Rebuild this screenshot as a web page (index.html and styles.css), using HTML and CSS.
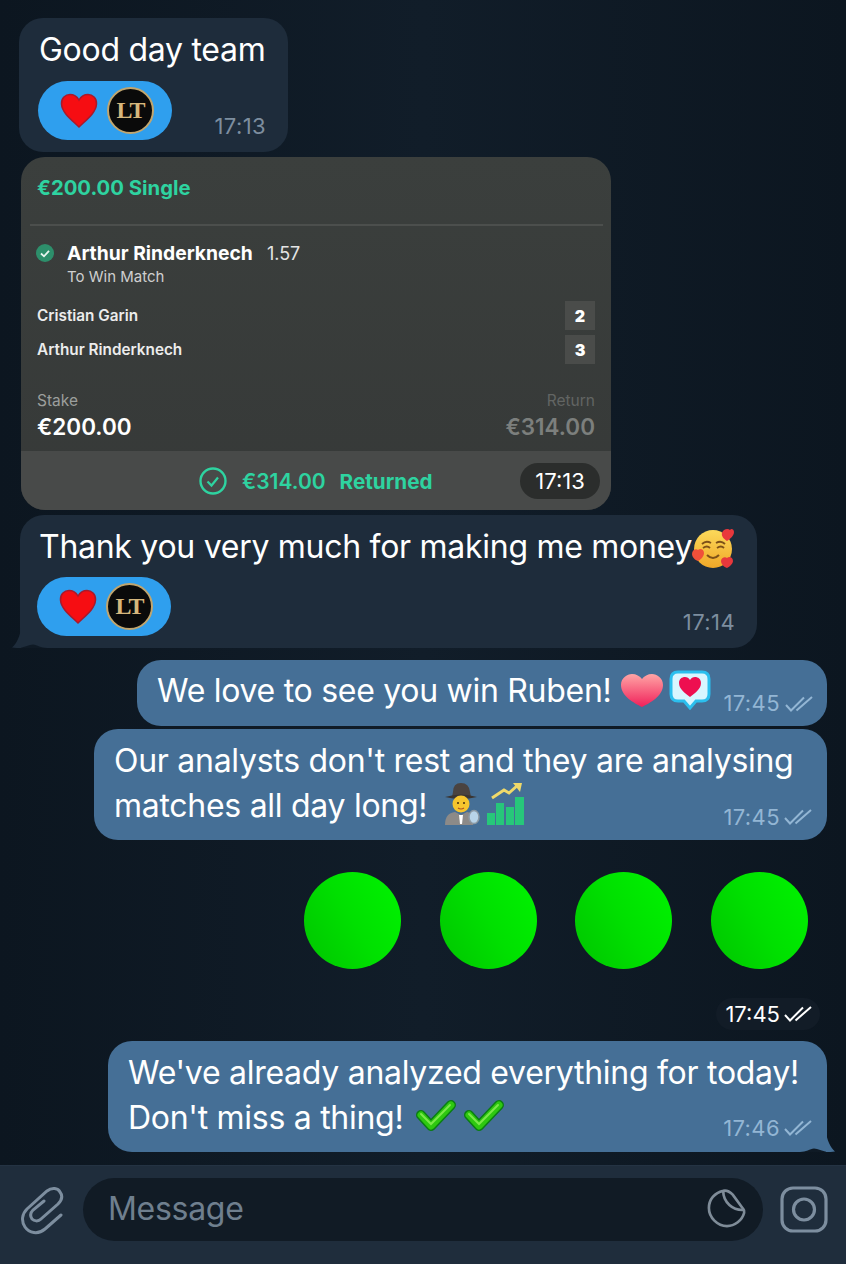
FILE: index.html
```html
<!DOCTYPE html>
<html lang="en">
<head>
    <meta charset="UTF-8">
    <meta name="viewport" content="width=device-width, initial-scale=1.0">
    <title>Chat</title>
    <link rel="stylesheet" href="styles.css">
</head>
<body>
    <svg class="defs" width="0" height="0">
        <defs>
            <symbol id="ticks" viewBox="0 0 28 16">
                <path d="M1 9l5 5.500L19 1.500M11.500 14.500L27 1" fill="none" stroke="currentColor" stroke-width="2"/>
            </symbol>
            <symbol id="red-heart" viewBox="0 0 38 36">
                <path d="M19 34C12 27 2 20 1.500 11 1.200 5 5.500 1.500 10 1.500c4 0 7 2 9 5.500 2-3.500 5-5.500 9-5.500 4.500 0 8.800 3.500 8.500 9.500C36 20 26 27 19 34z" fill="#f60d12" stroke="#a81a2c" stroke-width="1.500"/>
            </symbol>
            <symbol id="green-check" viewBox="0 0 40 34">
                <path d="M5 16l10 11L35 6" fill="none" stroke="#0a7d14" stroke-width="10" stroke-linejoin="round" stroke-linecap="round"/>
                <path d="M5 16l10 11L35 6" fill="none" stroke="#2ec810" stroke-width="7" stroke-linejoin="round" stroke-linecap="round"/>
                <path d="M5 15l10 10L34 6" fill="none" stroke="#7be84a" stroke-width="2" stroke-linecap="round"/>
            </symbol>
        </defs>
    </svg>

    <main class="chat">
        <div class="bubble in msg-first">
            <p class="text">Good day team</p>
            <div class="meta-row">
                <div class="reaction">
                    <svg class="heart" width="38" height="36"><use href="#red-heart"/></svg>
                    <div class="lt-badge">LT</div>
                </div>
                <span class="time">17:13</span>
            </div>
        </div>

        <div class="bet-card">
            <div class="bet-head">€200.00 Single</div>
            <div class="bet-body">
                <div class="pick">
                    <svg class="pick-check" width="18" height="18" viewBox="0 0 18 18">
                        <circle cx="9" cy="9" r="9" fill="#2d8f6b"/>
                        <path d="M5 9.500l3 2.800 5-5.500" fill="none" stroke="#e8f5ef" stroke-width="1.800"/>
                    </svg>
                    <span class="pick-name">Arthur Rinderknech</span>
                    <span class="pick-odds">1.57</span>
                </div>
                <div class="pick-market">To Win Match</div>
                <div class="score-row"><span>Cristian Garin</span><b class="score">2</b></div>
                <div class="score-row"><span>Arthur Rinderknech</span><b class="score">3</b></div>
                <div class="money">
                    <div>
                        <div class="money-label">Stake</div>
                        <div class="money-value">€200.00</div>
                    </div>
                    <div class="money-return">
                        <div class="money-label">Return</div>
                        <div class="money-value">€314.00</div>
                    </div>
                </div>
            </div>
            <div class="bet-foot">
                <svg class="returned-icon" width="28" height="28" viewBox="0 0 28 28">
                    <circle cx="14" cy="14" r="12.500" fill="none" stroke="#2ed3a0" stroke-width="2.400"/>
                    <path d="M8.500 14.500l4 4 6.500-8" fill="none" stroke="#2ed3a0" stroke-width="2.200"/>
                </svg>
                <span class="returned-sum">€314.00</span>
                <span class="returned-word">Returned</span>
                <span class="time-pill">17:13</span>
            </div>
        </div>

        <div class="bubble in msg-thanks">
            <p class="text">Thank you very much for making me money<svg class="emoji-face" width="42" height="42" viewBox="0 0 42 42">
                <defs>
                    <linearGradient id="face" x1="0" y1="0" x2="0" y2="1">
                        <stop offset="0" stop-color="#fcd95a"/>
                        <stop offset="1" stop-color="#f0a828"/>
                    </linearGradient>
                </defs>
                <circle cx="21" cy="22" r="19" fill="url(#face)"/>
                <path d="M10 17q4-4 9-1M24 16q5-3 9 1M11 21q4-3 7 0M25 21q4-3 7 0" fill="none" stroke="#7d5018" stroke-width="1.800"/>
                <path d="M15 28q6 6 12 0" fill="none" stroke="#7d5018" stroke-width="2"/>
                <path d="M30 6c1-4 6-5 8-3 1-2 4-1 4 2 0 4-4 7-7 9-3-2-6-5-5-8z" fill="#e8383c"/>
                <path d="M0 27c0-4 4-6 6-4 2-2 6-1 6 3 0 4-4 7-6 8-3-1-6-4-6-7z" fill="#f0503a"/>
                <path d="M29 34c0-3 4-5 6-3 2-2 6-1 6 3 0 3-4 6-6 7-3-1-6-4-6-7z" fill="#e8383c"/>
            </svg></p>
            <div class="meta-row">
                <div class="reaction">
                    <svg class="heart" width="38" height="36"><use href="#red-heart"/></svg>
                    <div class="lt-badge">LT</div>
                </div>
                <span class="time">17:14</span>
            </div>
            <svg class="tail tail-left" width="36" height="20" viewBox="0 0 36 20">
                <path d="M0 20C6 20 10 17 14 16.500 18 17 22 19 27 20z" fill="#0f1a25"/>
                <path d="M26 0C27 8 30 15 35 19.500 32 20 29 20 26 20z" fill="#1e2c3b"/>
            </svg>
        </div>

        <div class="bubble out msg-love">
            <p class="text">We love to see you win Ruben!</p>
            <svg class="emoji-pink" width="44" height="36" viewBox="0 0 44 36">
                <defs>
                    <linearGradient id="pink" x1="0" y1="0" x2="0" y2="1">
                        <stop offset="0" stop-color="#ffa5a5"/>
                        <stop offset="1" stop-color="#f0205a"/>
                    </linearGradient>
                </defs>
                <path d="M22 34C14 30 1 23 1 12 1 5 7 1 12 1c4 0 8 2 10 5 2-3 6-5 10-5 5 0 11 4 11 11 0 11-13 18-21 22z" fill="url(#pink)"/>
            </svg>
            <svg class="emoji-speech" width="42" height="40" viewBox="0 0 42 40">
                <path d="M9 2h24q7 0 7 7v15q0 7-7 7h-6l-6 7-6-7H9q-7 0-7-7V9q0-7 7-7z" fill="#d8f6ff" stroke="#2bbfee" stroke-width="3"/>
                <path d="M21 27c-5-4-11-8-11-14 0-4 3-6 6-6 2 0 4 1 5 3 1-2 3-3 5-3 3 0 6 2 6 6 0 6-6 10-11 14z" fill="#ee0f50"/>
            </svg>
            <span class="time">17:45</span>
            <svg class="ticks" width="28" height="16"><use href="#ticks"/></svg>
        </div>

        <div class="bubble out msg-analysts">
            <div class="text">
                <div>Our analysts don't rest and they are analysing</div>
                <div class="line">
                    <span>matches all day long!</span>
                    <svg class="emoji-spy" width="36" height="44" viewBox="0 0 36 44">
                        <path d="M9 10q0-9 8-9 8 0 9 9l1 5H8z" fill="#4a4340"/>
                        <path d="M1 15q16-5 32 0-16 4-32 0z" fill="#3a3532"/>
                        <circle cx="17" cy="22" r="8.500" fill="#f6c52e"/>
                        <circle cx="14" cy="21" r="1" fill="#402a10"/>
                        <circle cx="20" cy="21" r="1" fill="#402a10"/>
                        <path d="M14 26q3 2 6 0" fill="none" stroke="#b05020" stroke-width="1.200"/>
                        <path d="M1 43q0-12 10-13l6 3 6-3q6 1 8 6l-2 7H1z" fill="#8c8a88"/>
                        <path d="M15 33h4l-1 9h-2z" fill="#fff"/>
                        <ellipse cx="30" cy="35" rx="5" ry="6.500" fill="#b8d4e8" stroke="#8c9aa4" stroke-width="1.500"/>
                    </svg>
                    <svg class="emoji-chart" width="40" height="44" viewBox="0 0 40 44">
                        <path d="M5 16l12-8 5 3 9-8" fill="none" stroke="#efd96a" stroke-width="3"/>
                        <path d="M26 1h9l-2 9z" fill="#efd96a"/>
                        <rect x="0" y="31" width="8" height="12" fill="#27c77a"/>
                        <rect x="9" y="21" width="8" height="22" fill="#27c77a"/>
                        <rect x="19" y="25" width="8" height="18" fill="#27c77a"/>
                        <rect x="28" y="15" width="9" height="28" fill="#27c77a"/>
                    </svg>
                </div>
            </div>
            <span class="time">17:45</span>
            <svg class="ticks" width="28" height="16"><use href="#ticks"/></svg>
        </div>

        <div class="dots">
            <span class="dot"></span>
            <span class="dot"></span>
            <span class="dot"></span>
            <span class="dot"></span>
        </div>

        <div class="sticker-time">
            <span>17:45</span>
            <svg width="28" height="16"><use href="#ticks"/></svg>
        </div>

        <div class="bubble out msg-today">
            <div class="text">
                <div>We've already analyzed everything for today!</div>
                <div class="line">
                    <span>Don't miss a thing!</span>
                    <svg class="emoji-check" width="40" height="34"><use href="#green-check"/></svg>
                    <svg class="emoji-check" width="40" height="34"><use href="#green-check"/></svg>
                </div>
            </div>
            <span class="time">17:46</span>
            <svg class="ticks" width="28" height="16"><use href="#ticks"/></svg>
            <svg class="tail tail-right" width="36" height="20" viewBox="0 0 36 20">
                <path d="M0 20C6 20 10 17 14 16.500 18 17 22 19 27 20z" fill="#0f1a25"/>
                <path d="M26 0C27 8 30 15 35 19.500 32 20 29 20 26 20z" fill="#456f96"/>
            </svg>
        </div>
    </main>

    <footer class="input-bar">
        <svg class="clip" width="44" height="50" viewBox="0 0 44 50">
            <path d="M41 30L25 44C18 50 9 48 5 42 1 36 2 29 7 24L27 6C32 2 38 3 40 7 43 11 42 15 38 19L21 34C18 37 14 36 12 34 10 31 10 28 13 25L24 16" fill="none" stroke="#7d8e9f" stroke-width="3" stroke-linecap="round"/>
        </svg>
        <div class="input">
            <span class="placeholder">Message</span>
            <svg class="sticker" width="40" height="40" viewBox="0 0 42 42">
                <path d="M17 3C8 5 2 12 2 21c0 10 9 19 19 19 8 0 16-6 18-14 .5-2 0-3-1-4L27 7c-3-3-6-5-10-4z" fill="none" stroke="#7f8c98" stroke-width="2.800"/>
                <path d="M17 3c0 12 10 21 22 20" fill="none" stroke="#7f8c98" stroke-width="2.800"/>
            </svg>
        </div>
        <svg class="camera" width="48" height="48" viewBox="0 0 48 48">
            <rect x="2" y="2" width="44" height="43" rx="11" fill="none" stroke="#7d8e9f" stroke-width="3.200"/>
            <circle cx="24" cy="23.500" r="10.500" fill="none" stroke="#7d8e9f" stroke-width="3.200"/>
        </svg>
    </footer>
</body>
</html>
```

FILE: styles.css
```css
* { box-sizing: border-box; }
html, body { margin: 0; padding: 0; }
body {
    width: 846px;
    height: 1264px;
    overflow: hidden;
    display: flex;
    flex-direction: column;
    font-family: 'Inter', 'Liberation Sans', sans-serif;
    background: linear-gradient(90deg, #0c1620 0%, #111d29 50%, #0c1620 100%);
    color: #fff;
}
.defs { position: absolute; }
.chat {
    flex: 1;
    display: flex;
    flex-direction: column;
    padding-top: 18px;
}
.bubble {
    position: relative;
    flex: none;
}
.in { background: #1e2c3b; border-radius: 24px; }
.out { background: #456f96; border-radius: 24px; }
.text {
    margin: 0;
    font-size: 32px;
    line-height: 45px;
    letter-spacing: -0.28px;
    white-space: nowrap;
}
.line {
    display: flex;
    align-items: center;
    height: 45px;
}
.time {
    font-size: 22px;
    line-height: 26px;
    letter-spacing: 0.4px;
    color: #7d8e9f;
}
.out .time { color: #93b6d4; }
.ticks { color: #93b6d4; }
.meta-row {
    display: flex;
    justify-content: space-between;
    align-items: flex-end;
}
.meta-row .time { margin-bottom: 1px; }
.reaction {
    display: flex;
    align-items: center;
    gap: 9px;
    width: 134px;
    height: 59px;
    padding-left: 22px;
    border-radius: 30px;
    background: #2f9fee;
}
.lt-badge {
    width: 47px;
    height: 47px;
    display: flex;
    align-items: center;
    justify-content: center;
    border-radius: 50%;
    border: 2px solid #c0a56e;
    background: #0a0a0a;
    color: #d6b77c;
    font-family: 'Liberation Serif', serif;
    font-weight: 700;
    font-size: 24px;
    letter-spacing: -1px;
}

/* received */
.msg-first {
    width: 269px;
    height: 134px;
    margin-left: 19px;
    padding: 9px 22px 0 19px;
}
.msg-first .text { margin-left: 1px; }
.msg-first .meta-row { margin-top: 9px; }

.msg-thanks {
    width: 737px;
    height: 133px;
    margin: 5px 0 0 20px;
    padding: 9px 22px 0 17px;
    border-bottom-left-radius: 0;
}
.msg-thanks .text { margin-left: 2px; display: flex; align-items: center; }
.emoji-face { margin-top: 2px; }
.msg-thanks .meta-row { margin-top: 8px; }

.tail {
    position: absolute;
    bottom: 0;
}
.tail-right { right: -9px; }
.tail-left {
    left: -9px;
    transform: scaleX(-1);
}

/* bet card */
.bet-card {
    width: 590px;
    height: 353px;
    margin: 5px 0 0 21px;
    border-radius: 24px;
    overflow: hidden;
    display: flex;
    flex-direction: column;
    background: linear-gradient(180deg, #3b3f3d 0%, #363938 100%);
}
.bet-head {
    height: 69px;
    margin: 0 8px 0 9px;
    padding: 19px 0 0 7px;
    border-bottom: 2px solid #4c4f4d;
    color: #2ed3a0;
    font-weight: 700;
    font-size: 20.300px;
    line-height: 24px;
}
.bet-body {
    flex: 1;
    padding: 15px 16px 0 16px;
}
.pick {
    display: flex;
    align-items: center;
    height: 24px;
}
.pick-check { margin-left: -1px; }
.pick-name {
    margin-left: 13px;
    font-weight: 700;
    font-size: 19.300px;
}
.pick-odds {
    margin-left: 14px;
    font-size: 18px;
    color: #e4e4e4;
}
.pick-market {
    margin: 2px 0 14px 30px;
    font-size: 15px;
    line-height: 20px;
    color: #cfcfcf;
}
.score-row {
    display: flex;
    justify-content: space-between;
    align-items: center;
    height: 29px;
    margin-bottom: 5px;
    font-weight: 600;
    font-size: 15.300px;
    color: #ececec;
}
.score {
    width: 30px;
    height: 29px;
    display: flex;
    align-items: center;
    justify-content: center;
    background: #4a4c4a;
    font-size: 16px;
    color: #fff;
}
.money {
    display: flex;
    justify-content: space-between;
    margin-top: 27px;
}
.money-label {
    font-size: 15.500px;
    line-height: 20px;
    color: #9c9f9d;
}
.money-value {
    margin-top: 1px;
    font-weight: 600;
    font-size: 22.500px;
    line-height: 30px;
}
.money-return { text-align: right; }
.money-return .money-label { color: #626563; }
.money-return .money-value { color: #7c7f7d; }
.bet-foot {
    position: relative;
    height: 59px;
    flex: none;
    display: flex;
    align-items: center;
    padding-left: 178px;
    background: #484a49;
    color: #2ed3a0;
    font-weight: 600;
    font-size: 21px;
    line-height: 28px;
}
.returned-sum { margin-left: 15px; padding-top: 2px; }
.returned-word { margin-left: 14px; padding-top: 2px; font-weight: 700; font-size: 20.700px; }
.time-pill {
    margin-left: auto;
    margin-right: 11px;
    width: 80px;
    height: 36px;
    display: flex;
    align-items: center;
    justify-content: center;
    border-radius: 18px;
    background: #2b2d2c;
    color: #fff;
    font-weight: 400;
    font-size: 22px;
}

/* sent */
.msg-love {
    width: 690px;
    height: 66px;
    margin: 12px 0 0 137px;
    padding: 8px 14px 0 20px;
    display: flex;
    align-items: flex-start;
}
.msg-love .emoji-pink { margin: 5px 0 0 auto; }
.msg-love .emoji-speech { margin: 2px 0 0 5px; }
.msg-love .time { margin: 22px 0 0 12px; }
.msg-love .ticks { margin: 28px 0 0 5px; }

.msg-analysts {
    width: 733px;
    height: 111px;
    margin: 3px 0 0 94px;
    padding: 9px 15px 0 20px;
}
.msg-analysts > .time,
.msg-today > .time {
    position: absolute;
    right: 47px;
    bottom: 10px;
}
.msg-analysts > .ticks,
.msg-today > .ticks {
    position: absolute;
    right: 15px;
    bottom: 15px;
}
.msg-today > .time { bottom: 11px; }
.msg-today > .ticks { bottom: 16px; }
.emoji-spy { margin: -3px 0 0 17px; }
.emoji-chart { margin: -4px 0 0 7px; }
.emoji-check { margin: -3px 0 0 13px; }
.emoji-check + .emoji-check { margin-left: 8px; }

.dots {
    height: 97px;
    margin: 32px 0 0 304px;
    display: flex;
    gap: 38.700px;
}
.dot {
    width: 97px;
    height: 97px;
    border-radius: 50%;
    background: linear-gradient(60deg, #00c400 0%, #00e000 50%, #00f400 100%);
}
.sticker-time {
    align-self: flex-end;
    display: flex;
    align-items: center;
    gap: 4px;
    height: 32px;
    margin: 29px 26px 0 0;
    padding: 0 8px 0 9px;
    border-radius: 16px;
    background: #121c27;
    font-size: 22px;
}
.msg-today {
    width: 719px;
    height: 111px;
    margin: 11px 0 0 108px;
    padding: 9px 15px 0 20px;
    border-bottom-right-radius: 0;
}

/* bottom bar */
.input-bar {
    flex: none;
    height: 99px;
    display: flex;
    align-items: center;
    padding: 0 18px 11px 20px;
    background: #1f2d3c;
    border-top: 1px solid #243343;
}
.input {
    flex: 1;
    height: 63px;
    margin: 0 17px 0 19px;
    padding: 0 16px 3px 25px;
    display: flex;
    align-items: center;
    justify-content: space-between;
    border-radius: 32px;
    background: #111b25;
}
.placeholder {
    font-size: 32px;
    letter-spacing: -0.3px;
    color: #6f7f8e;
}
```
